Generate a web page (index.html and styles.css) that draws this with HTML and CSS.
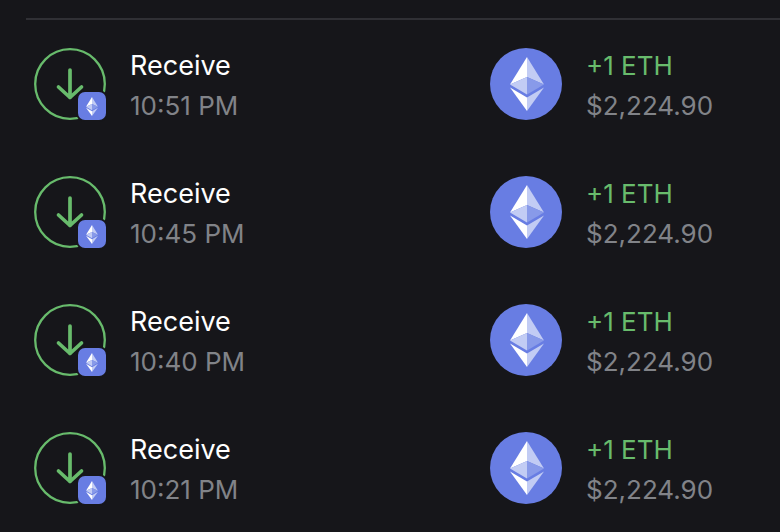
FILE: index.html
```html
<!DOCTYPE html>
<html lang="en">
<head>
<meta charset="utf-8">
<meta name="viewport" content="width=device-width, initial-scale=1">
<title>Transactions</title>
<link rel="stylesheet" href="styles.css">
</head>
<body>
<svg class="sprite" aria-hidden="true">
  <symbol id="ether" viewBox="0 0 34 54">
    <path fill="#fff" d="M17 0v20L0 27.500z"/>
    <path fill="#c2ccf4" d="M17 0v20l17 7.500z"/>
    <path fill="#889ae9" d="M17 20v17.400l17-9.900z"/>
    <path fill="#c2ccf4" d="M0 27.500L17 20v17.400z"/>
    <path fill="#fff" d="M17 54V40.500L0 30.600z"/>
    <path fill="#c2ccf4" d="M17 54V40.500l17-9.900z"/>
  </symbol>
  <symbol id="receive" viewBox="0 0 72 72">
    <g fill="none" stroke="#68bb6c">
      <circle stroke-width="2.300" cx="36" cy="36" r="34.800"/>
      <path stroke-width="3.700" stroke-linecap="round" stroke-linejoin="round" d="M36 22V49.500M24.500 39L36 49.500L47.500 39"/>
    </g>
  </symbol>
</svg>
<main class="activity">
  <ul class="list">
    <li class="row">
      <div class="cell">
        <div class="icon"><svg class="action"><use href="#receive"/></svg><span class="badge"><svg><use href="#ether"/></svg></span></div>
        <div class="text"><p class="title">Receive</p><p class="detail">10:51 PM</p></div>
      </div>
      <div class="cell">
        <div class="icon coin"><svg><use href="#ether"/></svg></div>
        <div class="text"><p class="amount">+1 ETH</p><p class="detail">$2,224.90</p></div>
      </div>
    </li>
    <li class="row">
      <div class="cell">
        <div class="icon"><svg class="action"><use href="#receive"/></svg><span class="badge"><svg><use href="#ether"/></svg></span></div>
        <div class="text"><p class="title">Receive</p><p class="detail">10:45 PM</p></div>
      </div>
      <div class="cell">
        <div class="icon coin"><svg><use href="#ether"/></svg></div>
        <div class="text"><p class="amount">+1 ETH</p><p class="detail">$2,224.90</p></div>
      </div>
    </li>
    <li class="row">
      <div class="cell">
        <div class="icon"><svg class="action"><use href="#receive"/></svg><span class="badge"><svg><use href="#ether"/></svg></span></div>
        <div class="text"><p class="title">Receive</p><p class="detail">10:40 PM</p></div>
      </div>
      <div class="cell">
        <div class="icon coin"><svg><use href="#ether"/></svg></div>
        <div class="text"><p class="amount">+1 ETH</p><p class="detail">$2,224.90</p></div>
      </div>
    </li>
    <li class="row">
      <div class="cell">
        <div class="icon"><svg class="action"><use href="#receive"/></svg><span class="badge"><svg><use href="#ether"/></svg></span></div>
        <div class="text"><p class="title">Receive</p><p class="detail">10:21 PM</p></div>
      </div>
      <div class="cell">
        <div class="icon coin"><svg><use href="#ether"/></svg></div>
        <div class="text"><p class="amount">+1 ETH</p><p class="detail">$2,224.90</p></div>
      </div>
    </li>
  </ul>
</main>
</body>
</html>
```

FILE: styles.css
```css
* {
  box-sizing: border-box;
}

body {
  margin: 0;
  background: #16161a;
  color: #fff;
  font-family: Inter, "Liberation Sans", sans-serif;
  font-size: 26px;
  line-height: 40px;
}

.sprite {
  position: absolute;
  width: 0;
  height: 0;
}

.activity {
  padding: 18px 0 0 26px;
}

.list {
  margin: 0;
  padding: 0;
  list-style: none;
  border-top: 2px solid #303035;
}

.row {
  display: grid;
  grid-template-columns: 2fr 1fr;
  padding: 26px 62px 22px 8px;
}

.cell {
  display: flex;
  align-items: flex-start;
  gap: 24px;
}

.icon {
  position: relative;
  flex: none;
  width: 72px;
  height: 72px;
  margin-top: 2px;
}

.action {
  display: block;
  width: 72px;
  height: 72px;
}

.badge {
  position: absolute;
  right: 0;
  bottom: 0;
  display: flex;
  align-items: center;
  justify-content: center;
  width: 28px;
  height: 28px;
  border-radius: 7px;
  background: #687de3;
  box-shadow: 0 0 0 2px #16161a;
}

.badge svg {
  width: 12px;
  height: 19px;
}

.coin {
  display: flex;
  align-items: center;
  justify-content: center;
  padding-left: 2px;
  border-radius: 50%;
  background: #687de3;
}

.coin svg {
  width: 34px;
  height: 54px;
}

.text {
  white-space: nowrap;
}

.title,
.amount,
.detail {
  margin: 0;
}

.title {
  font-size: 27px;
}

.amount {
  color: #68bb6c;
}

.detail {
  color: #818388;
}
```
